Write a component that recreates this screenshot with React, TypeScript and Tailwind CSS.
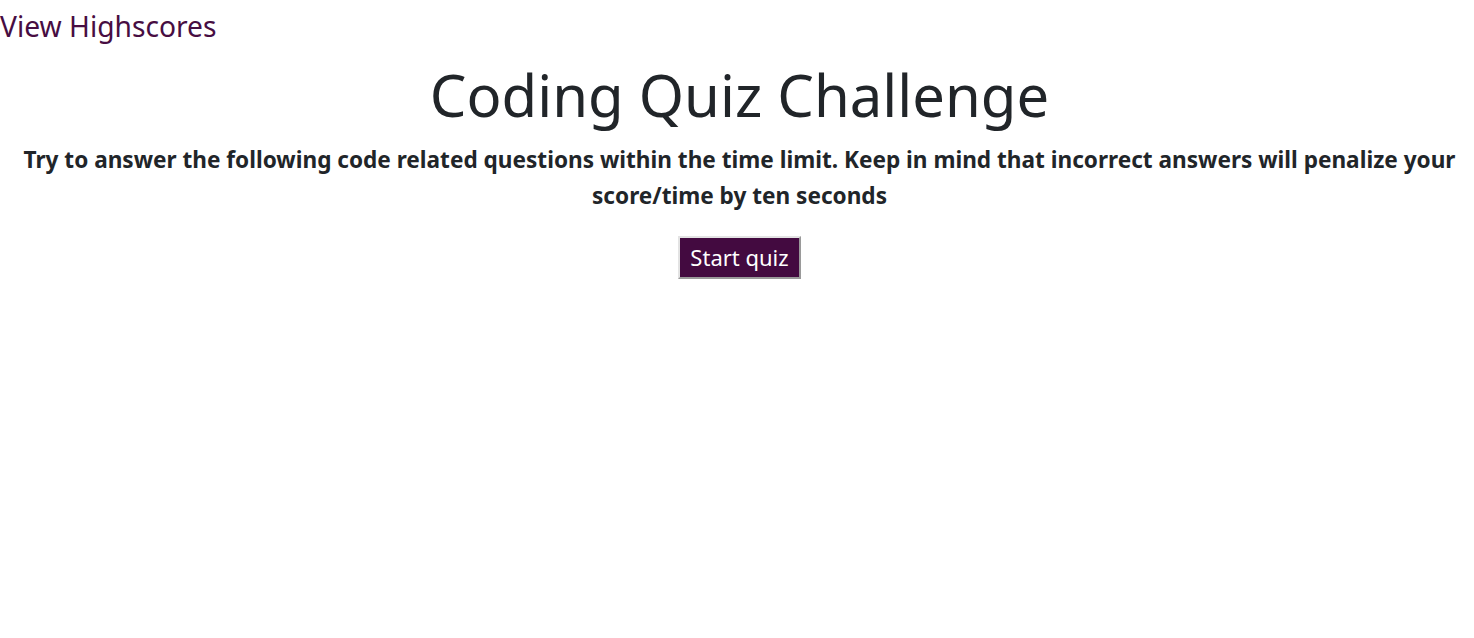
import React from "react";

export default function App() {
  return (
    <div className="min-h-[638px] bg-white text-[#212529] font-['Noto_Sans',sans-serif]">
      <a href="#" className="block w-fit pt-[5px] text-[28.2px] leading-[42px] text-[#470d42]">
        View Highscores
      </a>
      <div className="flex flex-col items-center pl-[5px] text-center">
        <h1 className="mt-[13px] text-[58px] font-normal leading-[1.2]">Coding Quiz Challenge</h1>
        <p className="mt-3 text-[22.6px] font-bold leading-[36px]">
          Try to answer the following code related questions within the time limit. Keep in mind that incorrect answers will penalize your score/time by ten seconds
        </p>
        <button className="mt-[22px] h-[43px] border-2 border-t-[#e3e3e3] border-l-[#e3e3e3] border-r-[#9a9a9a] border-b-[#9a9a9a] bg-[#430a40] px-[10px] text-[22px] leading-[30px] text-white">
          Start quiz
        </button>
      </div>
    </div>
  );
}
